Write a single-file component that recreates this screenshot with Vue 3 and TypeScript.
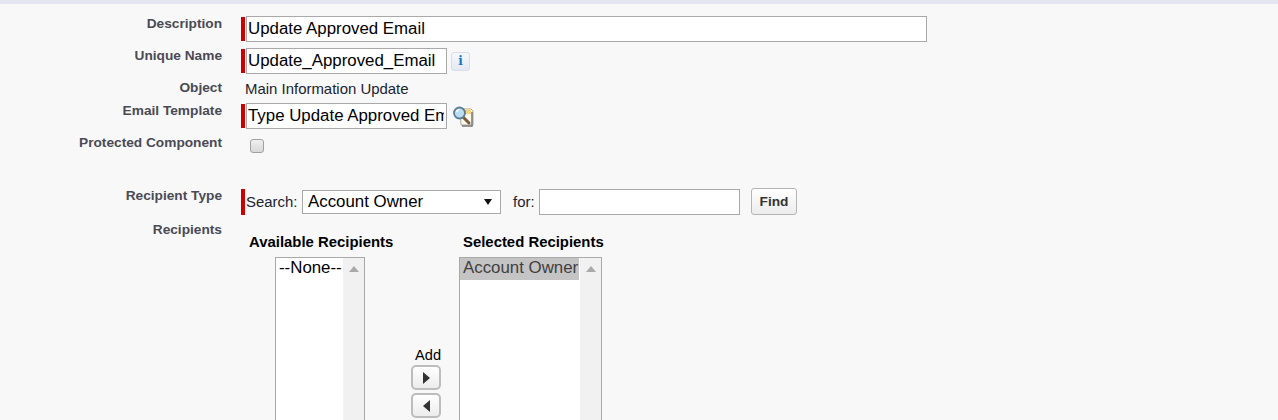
<script setup lang="ts">
const description = 'Update Approved Email'
const uniqueName = 'Update_Approved_Email'
const template = 'Type Update Approved Email'
</script>

<template>
  <div class="page">
    <div class="topbar"></div>
    <form class="form" @submit.prevent>
      <div class="row r1">
        <div class="label">Description</div>
        <div class="field">
          <span class="req"></span>
          <input class="text wide" :value="description" />
        </div>
      </div>
      <div class="row r2">
        <div class="label">Unique Name</div>
        <div class="field">
          <span class="req"></span>
          <input class="text short" :value="uniqueName" />
          <button type="button" class="info">i</button>
        </div>
      </div>
      <div class="row r3">
        <div class="label">Object</div>
        <div class="field plain">Main Information Update</div>
      </div>
      <div class="row r4">
        <div class="label">Email Template</div>
        <div class="field">
          <span class="req"></span>
          <input class="text short" :value="template" />
          <svg class="lookup" width="22" height="22" viewBox="0 0 22 22">
            <path d="M8 4h11l2 2v14H9z" fill="#fdf9ea" stroke="#a8a8a8" />
            <path d="M12 4h7v5h-7z" fill="#f6d684" />
            <path d="M20 7v14H10" fill="none" stroke="#777" stroke-width="1.5" />
            <path d="M11 12l6 6" stroke="#7a5a3a" stroke-width="3" stroke-linecap="round" />
            <circle cx="7.5" cy="8" r="5.5" fill="#bcdcf0" stroke="#5a7e96" stroke-width="1.8" />
            <path d="M4.5 7a3.5 3.5 0 0 1 3-2.5" fill="none" stroke="#fff" stroke-width="1.3" />
          </svg>
        </div>
      </div>
      <div class="row r5">
        <div class="label">Protected Component</div>
        <div class="field"><span class="check"></span></div>
      </div>
      <div class="row r6">
        <div class="label">Recipient Type</div>
        <div class="field search">
          <span class="req"></span>
          <span class="lbl-search">Search:</span>
          <div class="select"><span>Account Owner</span><i class="caret"></i></div>
          <span class="lbl-for">for:</span>
          <input class="text find-input" value="" />
          <button type="button" class="btn find">Find</button>
        </div>
      </div>
      <div class="row r7">
        <div class="label">Recipients</div>
        <div class="duel">
          <div class="col available">
            <div class="col-title">Available Recipients</div>
            <div class="listbox list-a">
              <div class="options"><div class="opt">--None--</div></div>
              <div class="scroll"><i class="up"></i></div>
            </div>
          </div>
          <div class="mid">
            <div class="add">Add</div>
            <button type="button" class="btn arrow"><i class="tri right"></i></button>
            <button type="button" class="btn arrow"><i class="tri left"></i></button>
          </div>
          <div class="col selected">
            <div class="col-title">Selected Recipients</div>
            <div class="listbox list-s">
              <div class="options"><div class="opt on">Account Owner</div></div>
              <div class="scroll"><i class="up"></i></div>
            </div>
          </div>
        </div>
      </div>
    </form>
  </div>
</template>

<style>
html, body { margin: 0; background: #f8f8f8; }
</style>

<style scoped>
.page {
  height: 420px;
  overflow: hidden;
  background: #f8f8f8;
  font-family: "Liberation Sans", Arial, sans-serif;
  color: #000;
}
.topbar { height: 4px; background: #e3e6f0; }
.form { padding-top: 12px; }
.row { display: flex; }
.r2 { margin-top: 6px; }
.r3 { margin-top: 6px; height: 17px; }
.r4 { margin-top: 6px; }
.r5 { margin-top: 6px; }
.r6 { margin-top: 35px; }
.r7 { margin-top: 7px; }
.label {
  width: 222px;
  flex: none;
  text-align: right;
  font-size: 13.7px;
  font-weight: 700;
  line-height: 14px;
  padding-top: 1px;
  height: 15px;
  color: #4a4a56;
}
.field {
  margin-left: 19px;
  display: flex;
  align-items: center;
  position: relative;
}
.plain {
  margin-left: 23px;
  font-size: 14.95px;
  line-height: 16px;
  color: #1c2430;
  padding-top: 1px;
  align-items: flex-start;
}
.req { width: 4px; height: 24px; background: #c00; flex: none; }
.text {
  box-sizing: border-box;
  height: 26px;
  border: 1px solid #a9a9a9;
  background: #fff;
  padding: 0 2px 0 1px;
  margin: 0 0 0 1px;
  font: 16.85px "Liberation Sans", Arial, sans-serif;
  color: #000;
  border-radius: 0;
  outline: none;
}
.wide { width: 681px; }
.short { width: 201px; }
.info {
  width: 19px;
  height: 19px;
  margin-left: 4px;
  padding: 0;
  border: 1px solid #d8dde6;
  border-radius: 3px;
  background: linear-gradient(#f6f8fb, #e4e9f1);
  color: #1f74c8;
  font: 700 12px/16px "DejaVu Serif", serif;
  text-align: center;
}
.lookup { margin-left: 5px; }
.check {
  box-sizing: border-box;
  width: 14px;
  height: 14px;
  margin: 4px 0 0 9px;
  border: 1px solid #a0a0a0;
  border-radius: 3px;
  background: linear-gradient(#f0f0f0, #d8d8d8);
}
.search { font-size: 14.9px; color: #1c2430; height: 27px; }
.search .req { height: 26px; margin-top: 1px; }
.lbl-search { margin-left: 1px; width: 56px; }
.select {
  box-sizing: border-box;
  width: 199px;
  height: 24px;
  margin-top: 1px;
  border: 1px solid #a9a9a9;
  background: #fff;
  padding: 0 5px;
  display: flex;
  align-items: center;
  justify-content: space-between;
  font-size: 16.85px;
  color: #000;
}
.caret {
  width: 0;
  height: 0;
  margin-right: 3px;
  border-left: 4px solid transparent;
  border-right: 4px solid transparent;
  border-top: 6px solid #111;
}
.lbl-for { margin-left: 12px; width: 26px; white-space: nowrap; }
.find-input { width: 201px; margin: 1px 0 0; padding-left: 2px; }
.btn {
  box-sizing: border-box;
  border: 1px solid #b5b5b5;
  border-radius: 3px;
  background: linear-gradient(#ffffff, #ececec);
  padding: 0;
  margin: 0;
}
.find {
  width: 46px;
  height: 27px;
  margin-left: 11px;
  font: 700 13.7px "Liberation Sans", Arial, sans-serif;
  color: #333;
}
.duel {
  margin-left: 27px;
  padding-top: 13px;
  display: flex;
}
.col { display: flex; flex-direction: column; }
.available { width: 146px; }
.selected { width: 145px; margin-left: 18px; }
.col-title {
  font-size: 14.9px;
  font-weight: 700;
  line-height: 14px;
  height: 22px;
  white-space: nowrap;
}
.selected .col-title { padding-left: 4px; }
.listbox {
  box-sizing: border-box;
  height: 220px;
  border: 1px solid #a9a9a9;
  background: #fff;
  display: flex;
}
.list-a { width: 90px; margin-left: 26px; }
.list-s { width: 143px; }
.options { flex: 1; min-width: 0; }
.opt {
  font-size: 16.85px;
  line-height: 20px;
  height: 22px;
  padding-left: 3px;
  white-space: nowrap;
}
.opt.on { background: #c4c4c4; color: #404040; margin-right: 1px; }
.scroll {
  width: 21px;
  flex: none;
  background: #f1f1f1;
  display: flex;
  justify-content: center;
  padding-top: 8px;
  box-sizing: border-box;
}
.up {
  width: 0;
  height: 0;
  border-left: 5px solid transparent;
  border-right: 5px solid transparent;
  border-bottom: 6px solid #a9a9a9;
}
.mid {
  width: 30px;
  margin-left: 16px;
  padding-top: 112px;
  display: flex;
  flex-direction: column;
  align-items: flex-end;
}
.add {
  font-size: 14.6px;
  line-height: 16px;
  height: 18px;
  width: 100%;
  text-align: right;
  white-space: nowrap;
}
.arrow {
  flex: none;
  width: 30px;
  height: 25px;
  margin-bottom: 3px;
  display: flex;
  align-items: center;
  justify-content: center;
  border-width: 2px;
  border-color: #bdbdbd;
  border-radius: 5px;
}
.tri { width: 0; height: 0; border-top: 6px solid transparent; border-bottom: 6px solid transparent; }
.right { border-left: 7px solid #333; }
.left { border-right: 7px solid #333; }
</style>
